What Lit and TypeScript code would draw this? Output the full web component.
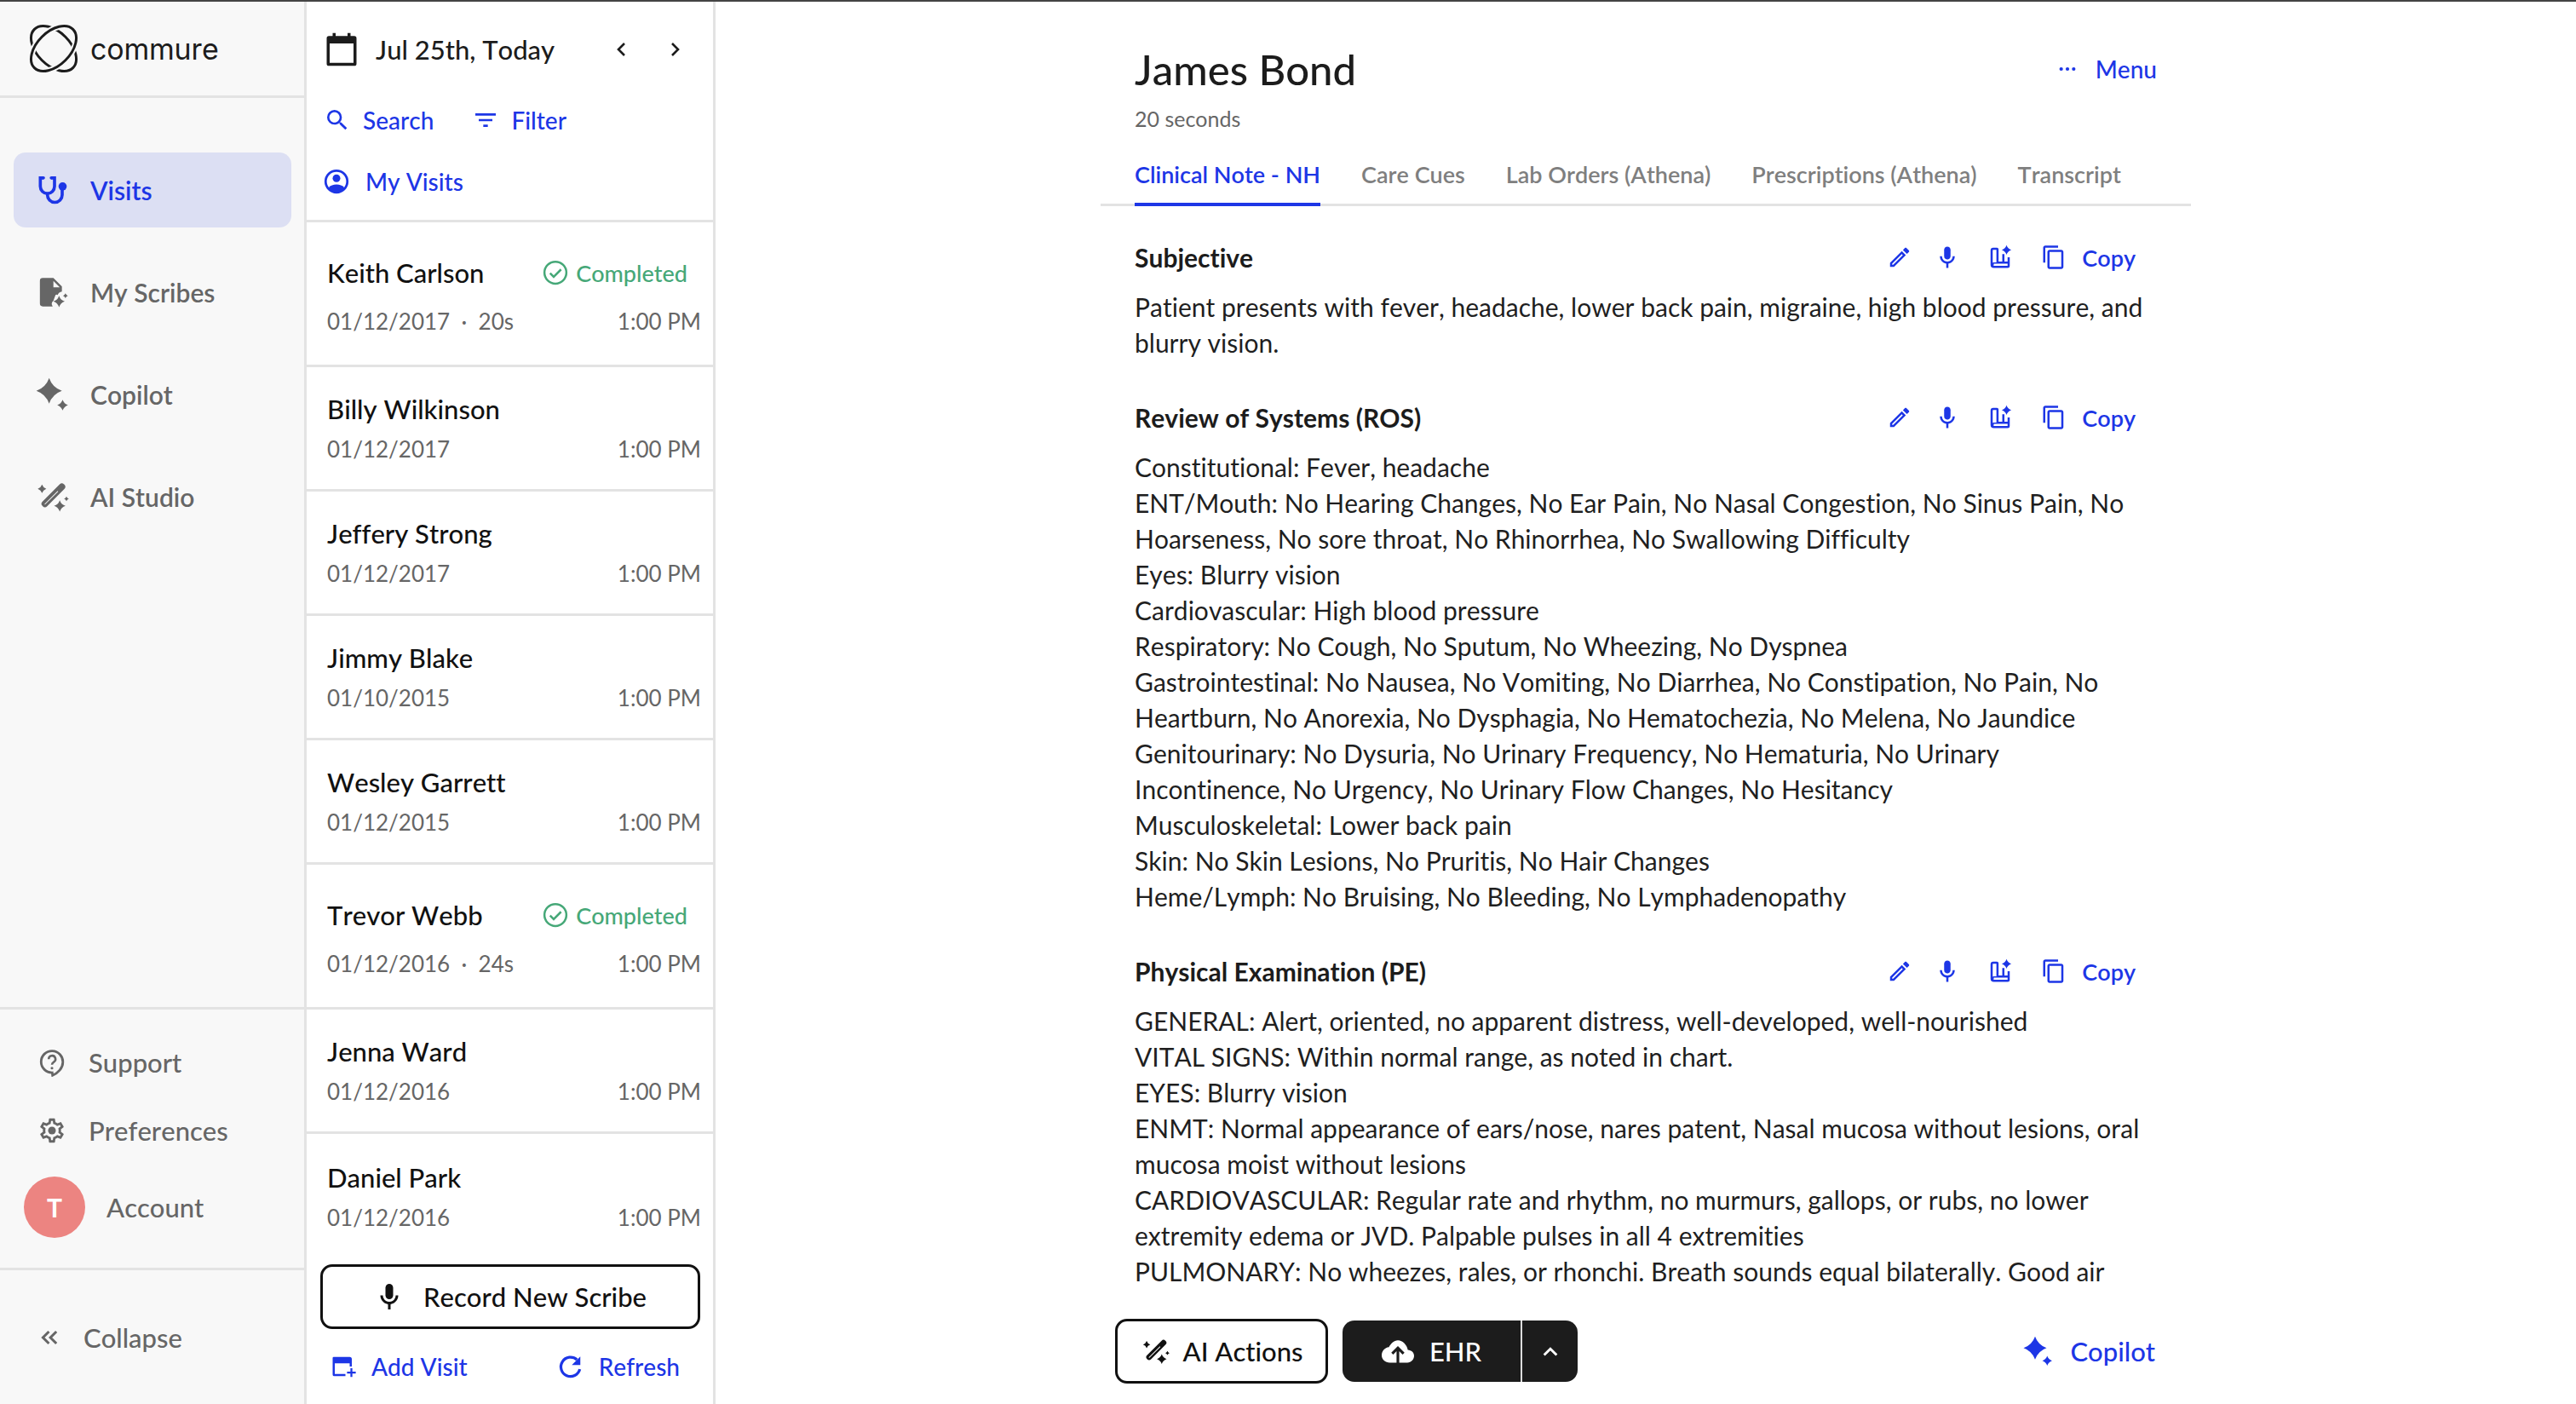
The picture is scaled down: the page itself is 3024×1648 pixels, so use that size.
import { LitElement, html, css, svg } from 'lit';
import { customElement } from 'lit/decorators.js';

// ── Icons ─────────────────────────────────────────────────────────────────────

const icon = (body: unknown, cls = '', box = '0 0 24 24') =>
  html`<svg class="icon ${cls}" viewBox=${box} fill="currentColor">${body}</svg>`;

const sparkle = (cx: number, cy: number, r: number) => {
  const k = r * 0.26;
  return svg`<path d="M${cx} ${cy - r}Q${cx + k} ${cy - k} ${cx + r} ${cy}Q${cx + k} ${cy + k} ${cx} ${cy + r}Q${cx - k} ${cy + k} ${cx - r} ${cy}Q${cx - k} ${cy - k} ${cx} ${cy - r}Z"/>`;
};

const MIC = svg`<path d="M12 14c1.66 0 3-1.34 3-3V5c0-1.66-1.34-3-3-3S9 3.34 9 5v6c0 1.66 1.34 3 3 3z"/><path d="M17 11c0 2.76-2.24 5-5 5s-5-2.24-5-5H5c0 3.53 2.61 6.43 6 6.92V22h2v-4.08c3.39-.49 6-3.39 6-6.92h-2z"/>`;
const EDIT = svg`<path d="M3 17.25V21h3.75L17.81 9.94l-3.75-3.75L3 17.25zM5.92 19H5v-.92l9.06-9.06.92.92L5.92 19zM20.71 5.63l-2.34-2.34c-.2-.2-.45-.29-.71-.29s-.51.1-.7.29l-1.83 1.83 3.75 3.75 1.83-1.83c.39-.39.39-1.02 0-1.41z"/>`;
const COPY = svg`<path d="M16 1H4c-1.1 0-2 .9-2 2v14h2V3h12V1zm3 4H8c-1.1 0-2 .9-2 2v14c0 1.1.9 2 2 2h11c1.1 0 2-.9 2-2V7c0-1.1-.9-2-2-2zm0 16H8V7h11v14z"/>`;
const NOTE_AI = svg`<path d="M3 17V5.500A2.500 2.500 0 0 1 5.500 3H9a1.500 1.500 0 0 1 1.500 1.500V16H14V9h2v7h3v-4h2v8a2 2 0 0 1-2 2H6a3 3 0 0 1-3-3v-2zm2 0a3 3 0 0 1 1-.3h2.500V5H5.500a.5.5 0 0 0-.5.5V17zm1 1.700a1.150 1.150 0 0 0 0 1.300h13V18H6z"/>${sparkle(18, 5, 4.5)}`;
const WAND = svg`<path d="M17.400 3.300a2.200 2.200 0 0 1 3.100 0l.2.2a2.200 2.200 0 0 1 0 3.100L8.600 18.700a2.200 2.200 0 0 1-3.100 0l-.2-.2a2.200 2.200 0 0 1 0-3.100L17.400 3.300zM16 8l-9.300 9.200.4.400L16.400 8.400 16 8z"/>${sparkle(5, 6.500, 3)}${sparkle(17.500, 18.500, 4)}${sparkle(22.200, 13.500, 1.700)}`;
const GEAR = svg`<path d="M19.43 12.98c.04-.32.07-.64.07-.98 0-.34-.03-.66-.07-.98l2.11-1.65c.19-.15.24-.42.12-.64l-2-3.46c-.09-.16-.26-.25-.44-.25-.06 0-.12.01-.17.03l-2.49 1c-.52-.4-1.08-.73-1.69-.98l-.38-2.65C14.46 2.18 14.25 2 14 2h-4c-.25 0-.46.18-.49.42l-.38 2.65c-.61.25-1.17.59-1.69.98l-2.49-1c-.06-.02-.12-.03-.18-.03-.17 0-.34.09-.43.25l-2 3.46c-.13.22-.07.49.12.64l2.11 1.65c-.04.32-.07.65-.07.98 0 .33.03.66.07.98l-2.11 1.65c-.19.15-.24.42-.12.64l2 3.46c.09.16.26.25.44.25.06 0 .12-.01.17-.03l2.49-1c.52.4 1.08.73 1.69.98l.38 2.65c.03.24.24.42.49.42h4c.25 0 .46-.18.49-.42l.38-2.65c.61-.25 1.17-.59 1.69-.98l2.49 1c.06.02.12.03.18.03.17 0 .34-.09.43-.25l2-3.46c.12-.22.07-.49-.12-.64l-2.11-1.65zm-1.98-1.71c.04.31.05.52.05.73 0 .21-.02.43-.05.73l-.14 1.13.89.7 1.08.84-.7 1.21-1.27-.51-1.04-.42-.9.68c-.43.32-.84.56-1.25.73l-1.06.43-.16 1.13-.2 1.35h-1.4l-.19-1.35-.16-1.13-1.06-.43c-.43-.18-.83-.41-1.23-.71l-.91-.7-1.06.43-1.27.51-.7-1.21 1.08-.84.89-.7-.14-1.13c-.03-.31-.05-.54-.05-.74s.02-.43.05-.73l.14-1.13-.89-.7-1.08-.84.7-1.21 1.27.51 1.04.42.9-.68c.43-.32.84-.56 1.25-.73l1.06-.43.16-1.13.2-1.35h1.39l.19 1.35.16 1.13 1.06.43c.43.18.83.41 1.23.71l.91.7 1.06-.43 1.27-.51.7 1.21-1.07.85-.89.7.14 1.13z"/><circle cx="12" cy="12" r="3.200"/>`;

const ICONS = {
  stethoscope: svg`<g fill="none" stroke="currentColor" stroke-width="2.200"><path d="M6 3.500H3.800v6a5 5 0 0 0 10 0v-6H11.500"/><path d="M8.800 14.500v1a5.200 5.200 0 0 0 10.400 0V11"/></g><circle cx="6" cy="3.500" r="1.100"/><circle cx="11.500" cy="3.500" r="1.100"/><circle cx="19.500" cy="9.500" r="2.900"/>`,
  scribes: svg`<path d="M5.500 2H13l6 6v3.500c-1.500.2-2.500 1-3 2.500-.5-.5-1-.5-1.500 0l-1.500 4a3 3 0 0 0-.5 4H5.500a2 2 0 0 1-2-2V4a2 2 0 0 1 2-2z"/><path d="M13 4v4.500H17.500z" fill="#f8f8f8"/>${sparkle(17, 18.500, 4)}${sparkle(21.500, 14.500, 1.700)}`,
  copilot: svg`${sparkle(10, 9.500, 9)}${sparkle(19.500, 19.500, 3.800)}`,
  search: svg`<path d="M15.500 14h-.79l-.28-.27A6.471 6.471 0 0 0 16 9.500 6.500 6.500 0 1 0 9.500 16c1.610 0 3.090-.59 4.230-1.570l.27.28v.79l5 4.990L20.490 19l-4.990-5zm-6 0C7.010 14 5 11.990 5 9.500S7.010 5 9.500 5 14 7.010 14 9.500 11.990 14 9.500 14z"/>`,
  filter: svg`<path d="M10 18h4v-2h-4v2zM3 6v2h18V6H3zm3 7h12v-2H6v2z"/>`,
  person: svg`<circle cx="12" cy="12" r="10.200" fill="none" stroke="currentColor" stroke-width="2.200"/><circle cx="12" cy="9" r="3.600"/><path d="M4.500 18c1.800-2.400 4.500-3.200 7.500-3.200s5.700.8 7.500 3.200c-1.800 2.700-4.600 4-7.500 4s-5.700-1.300-7.500-4z"/>`,
  calendar: svg`<path d="M6 1h2v2h8V1h2v2h2.500A1.500 1.500 0 0 1 22 4.500v17a1.500 1.500 0 0 1-1.500 1.500h-17A1.500 1.500 0 0 1 2 21.500v-17A1.500 1.500 0 0 1 3.500 3H6V1zM4 8v13h16V8H4z"/>`,
  check: svg`<circle cx="12" cy="12" r="10.300" fill="none" stroke="currentColor" stroke-width="2"/><path d="M7 12.500l3.400 3.400L17.300 9" fill="none" stroke="currentColor" stroke-width="2"/>`,
  help: svg`<path d="M12.500 22.800l-.3-2.300a9 9 0 1 1 8.800-8.500c0 4.800-4 8.800-8.500 10.800z" fill="none" stroke="currentColor" stroke-width="2"/><path d="M9.300 9.300a2.800 2.800 0 1 1 4.200 2.400c-1 .6-1.500 1.100-1.500 2.300" fill="none" stroke="currentColor" stroke-width="1.800"/><circle cx="12" cy="16.800" r="1.100"/>`,
  collapse: svg`<path d="M11.500 6l-6 6 6 6M19 6l-6 6 6 6" fill="none" stroke="currentColor" stroke-width="2.600"/>`,
  left: svg`<path d="M15 5l-7 7 7 7" fill="none" stroke="currentColor" stroke-width="2.600"/>`,
  right: svg`<path d="M9 5l7 7-7 7" fill="none" stroke="currentColor" stroke-width="2.600"/>`,
  up: svg`<path d="M4 17l8-8 8 8" fill="none" stroke="currentColor" stroke-width="3.200"/>`,
  addVisit: svg`<path d="M3 3h15a2 2 0 0 1 2 2v7h-2V9H4v10h10v2H3.500A1.500 1.500 0 0 1 2 19.500V4a1 1 0 0 1 1-1z"/><path d="M18.700 13.500h1.800v3.200h3.200v1.800h-3.200v3.200h-1.800v-3.200h-3.200v-1.800h3.200z"/>`,
  refresh: svg`<path d="M20.500 14.500A9 9 0 1 1 17.800 5.600" fill="none" stroke="currentColor" stroke-width="2.600"/><path d="M21 2.500v8h-8z"/>`,
  dots: svg`<circle cx="4" cy="12" r="2.300"/><circle cx="12" cy="12" r="2.300"/><circle cx="20" cy="12" r="2.300"/>`,
  cloud: svg`<path d="M19.350 11.040C18.670 7.590 15.640 4 12 4 9.110 4 6.600 6.640 5.350 9.040 2.340 9.360 0 11.910 0 15c0 3.310 2.690 5.500 6 5.500h13c2.760 0 5-2.240 5-5 0-2.640-2.050-4.280-4.650-4.460z"/><path d="M12 21v-11M7.800 13.800L12 9.600l4.200 4.200" fill="none" stroke="#1c1c1c" stroke-width="2"/>`,
};

// ── Data ──────────────────────────────────────────────────────────────────────

const NAV = [
  { label: 'Visits', icon: ICONS.stethoscope, active: true },
  { label: 'My Scribes', icon: ICONS.scribes },
  { label: 'Copilot', icon: ICONS.copilot },
  { label: 'AI Studio', icon: WAND },
];

const VISITS = [
  { name: 'Keith Carlson', date: '01/12/2017', dur: '20s', done: true },
  { name: 'Billy Wilkinson', date: '01/12/2017' },
  { name: 'Jeffery Strong', date: '01/12/2017' },
  { name: 'Jimmy Blake', date: '01/10/2015' },
  { name: 'Wesley Garrett', date: '01/12/2015' },
  { name: 'Trevor Webb', date: '01/12/2016', dur: '24s', done: true },
  { name: 'Jenna Ward', date: '01/12/2016' },
  { name: 'Daniel Park', date: '01/12/2016' },
];

const TABS = ['Clinical Note - NH', 'Care Cues', 'Lab Orders (Athena)', 'Prescriptions (Athena)', 'Transcript'];

const SECTIONS = [
  {
    title: 'Subjective',
    lines: ['Patient presents with fever, headache, lower back pain, migraine, high blood pressure, and blurry vision.'],
  },
  {
    title: 'Review of Systems (ROS)',
    lines: [
      'Constitutional: Fever, headache',
      'ENT/Mouth: No Hearing Changes, No Ear Pain, No Nasal Congestion, No Sinus Pain, No Hoarseness, No sore throat, No Rhinorrhea, No Swallowing Difficulty',
      'Eyes: Blurry vision',
      'Cardiovascular: High blood pressure',
      'Respiratory: No Cough, No Sputum, No Wheezing, No Dyspnea',
      'Gastrointestinal: No Nausea, No Vomiting, No Diarrhea, No Constipation, No Pain, No Heartburn, No Anorexia, No Dysphagia, No Hematochezia, No Melena, No Jaundice',
      'Genitourinary: No Dysuria, No Urinary Frequency, No Hematuria, No Urinary Incontinence, No Urgency, No Urinary Flow Changes, No Hesitancy',
      'Musculoskeletal: Lower back pain',
      'Skin: No Skin Lesions, No Pruritis, No Hair Changes',
      'Heme/Lymph: No Bruising, No Bleeding, No Lymphadenopathy',
    ],
  },
  {
    title: 'Physical Examination (PE)',
    lines: [
      'GENERAL: Alert, oriented, no apparent distress, well-developed, well-nourished',
      'VITAL SIGNS: Within normal range, as noted in chart.',
      'EYES: Blurry vision',
      'ENMT: Normal appearance of ears/nose, nares patent, Nasal mucosa without lesions, oral mucosa moist without lesions',
      'CARDIOVASCULAR: Regular rate and rhythm, no murmurs, gallops, or rubs, no lower extremity edema or JVD. Palpable pulses in all 4 extremities',
      'PULMONARY: No wheezes, rales, or rhonchi. Breath sounds equal bilaterally. Good air movement throughout all lung fields.',
    ],
  },
];

// ── AppRoot ───────────────────────────────────────────────────────────────────

@customElement('app-root')
export class AppRoot extends LitElement {
  static styles = css`
    :host {
      display: grid;
      grid-template-columns: 360px 480px 1fr;
      grid-template-rows: minmax(0, 1fr);
      height: 1648px;
      box-sizing: border-box;
      border-top: 2px solid #444;
      overflow: hidden;
      background: #fff;
      color: #1f1f1f;
      font-family: Lato, 'Liberation Sans', sans-serif;
      font-kerning: none;
      font-variant-ligatures: none;
      --blue: #1d36e6;
      --line: #e3e3e3;
    }

    * {
      box-sizing: border-box;
    }

    .icon {
      display: block;
      flex: none;
      width: 28px;
      height: 28px;
    }

    /* sidebar */

    .sidebar {
      display: flex;
      flex-direction: column;
      min-height: 0;
      background: #f8f8f8;
      border-right: 3px solid var(--line);
      color: #666;
    }

    .brand {
      display: flex;
      align-items: center;
      gap: 14px;
      height: 113px;
      padding: 0 0 0 34px;
      border-bottom: 3px solid var(--line);
      color: #1c1c1c;
      font-family: Inter, sans-serif;
      font-size: 34px;
      letter-spacing: -0.2px;
    }

    .brand svg {
      width: 58px;
      height: 58px;
    }

    .nav {
      display: flex;
      flex-direction: column;
      gap: 32px;
      flex: 1;
      padding: 64px 15px 0 16px;
    }

    .nav-item {
      display: flex;
      align-items: center;
      gap: 25px;
      height: 88px;
      padding-left: 25px;
      border-radius: 14px;
      font-size: 30px;
      font-weight: 600;
    }

    .nav-item .icon {
      width: 40px;
      height: 40px;
    }

    .nav-item.active {
      background: #dcdff3;
      color: var(--blue);
    }

    .foot {
      display: flex;
      flex-direction: column;
      height: 306px;
      padding: 22px 0 0 28px;
      border-top: 3px solid var(--line);
      font-size: 31px;
      font-weight: 500;
    }

    .foot-item {
      display: flex;
      align-items: center;
      gap: 26px;
      height: 80px;
      padding-left: 16px;
    }

    .foot-item .icon {
      width: 34px;
      height: 34px;
    }

    .account {
      display: flex;
      align-items: center;
      gap: 25px;
      height: 100px;
    }

    .avatar {
      display: flex;
      align-items: center;
      justify-content: center;
      width: 72px;
      height: 72px;
      border-radius: 50%;
      background: #ec8481;
      color: #fff;
      font-size: 30px;
      font-weight: 700;
    }

    .collapse {
      display: flex;
      align-items: center;
      gap: 26px;
      height: 160px;
      padding: 0 0 0 44px;
      border-top: 3px solid var(--line);
      font-size: 31px;
      font-weight: 500;
    }

    /* visit list */

    .list {
      display: flex;
      flex-direction: column;
      min-height: 0;
      border-right: 3px solid var(--line);
    }

    .date-row {
      display: flex;
      align-items: center;
      height: 112px;
      padding: 0 0 0 20px;
      font-size: 31px;
      font-weight: 500;
      color: #1c1c1c;
    }

    .date-row .cal {
      width: 42px;
      height: 42px;
      margin-right: 19px;
    }

    .date-row .nav-arrow {
      width: 24px;
      height: 24px;
    }

    .date-label {
      width: 277px;
    }

    .date-row .gap {
      width: 38px;
    }

    .tools {
      display: flex;
      align-items: center;
      gap: 14px;
      height: 54px;
      padding-left: 20px;
      color: var(--blue);
      font-size: 28px;
      font-weight: 500;
    }

    .tools .icon {
      width: 32px;
      height: 32px;
    }

    .tools .second {
      margin-left: 31px;
    }

    .tools.mine {
      gap: 19px;
      height: 90px;
    }

    .tools.mine .icon {
      width: 30px;
      height: 30px;
    }

    .visits {
      flex: 1;
      min-height: 0;
      border-top: 3px solid var(--line);
    }

    .visit {
      display: flex;
      flex-direction: column;
      justify-content: center;
      gap: 11px;
      height: 146px;
      padding: 0 14px 0 24px;
      border-bottom: 3px solid var(--line);
    }

    .visit:last-child {
      border-bottom: 0;
    }

    .visit.done {
      height: 170px;
      gap: 21px;
      padding-top: 6px;
    }

    .visit-top,
    .visit-sub {
      display: flex;
      align-items: center;
      justify-content: space-between;
    }

    .visit-name {
      font-size: 31px;
      font-weight: 500;
      color: #111;
      line-height: 38px;
    }

    .status {
      display: flex;
      align-items: center;
      gap: 9px;
      margin-right: 16px;
      color: #46a878;
      font-size: 27px;
      font-weight: 500;
    }

    .status .icon {
      width: 30px;
      height: 30px;
    }

    .visit-sub {
      color: #666;
      font-size: 26px;
      line-height: 34px;
    }

    .actions {
      padding: 0 15px 0 16px;
    }

    .record {
      display: flex;
      align-items: center;
      justify-content: center;
      gap: 22px;
      height: 76px;
      border: 3px solid #111;
      border-radius: 14px;
      color: #111;
      font-size: 31px;
      font-weight: 500;
    }

    .record .icon {
      width: 36px;
      height: 36px;
    }

    .links {
      display: flex;
      align-items: center;
      justify-content: space-between;
      height: 88px;
      padding: 0 24px 0 12px;
      color: var(--blue);
      font-size: 28px;
      font-weight: 500;
    }

    .link {
      display: flex;
      align-items: center;
      gap: 18px;
    }

    .links .icon {
      width: 30px;
      height: 30px;
    }

    /* note */

    .main {
      display: flex;
      flex-direction: column;
      align-items: center;
      min-width: 0;
      min-height: 0;
    }

    .panel {
      display: flex;
      flex-direction: column;
      width: 1280px;
      height: 100%;
      min-height: 0;
    }

    .head {
      padding: 0 40px;
    }

    .title-row {
      display: flex;
      align-items: center;
      justify-content: space-between;
      height: 78px;
      margin-top: 40px;
    }

    h1 {
      margin: 0;
      font-size: 49px;
      font-weight: 500;
      color: #1c1c1c;
    }

    .menu {
      display: flex;
      align-items: center;
      gap: 22px;
      color: var(--blue);
      font-size: 28px;
      font-weight: 500;
    }

    .menu .icon {
      width: 22px;
      height: 22px;
    }

    .elapsed {
      margin-top: 4px;
      color: #666;
      font-size: 25px;
      line-height: 30px;
    }

    .tabs {
      display: flex;
      gap: 48px;
      height: 88px;
      padding: 0 40px;
      border-bottom: 3px solid var(--line);
      color: #7f7f7f;
      font-size: 27px;
      font-weight: 600;
    }

    .tab {
      display: flex;
      align-items: center;
      padding-top: 17px;
      height: 88px;
      border-bottom: 4px solid transparent;
    }

    .tab.active {
      color: var(--blue);
      border-bottom-color: var(--blue);
    }

    .note {
      flex: 1;
      min-height: 0;
      overflow: hidden;
      padding: 35px 40px 0;
    }

    .section {
      margin-bottom: 42px;
    }

    .section-head {
      display: flex;
      align-items: center;
      justify-content: space-between;
      height: 50px;
      padding-right: 25px;
      margin-bottom: 12px;
    }

    h2 {
      margin: 0;
      font-size: 30px;
      font-weight: 700;
      color: #1c1c1c;
    }

    .section-tools {
      display: flex;
      align-items: center;
      color: var(--blue);
      font-size: 27px;
      font-weight: 600;
    }

    .section-tools .icon {
      width: 30px;
      height: 30px;
    }

    .section-tools .edit {
      margin-right: 26px;
    }

    .section-tools .mic {
      margin-right: 32px;
    }

    .section-tools .doc {
      margin-right: 33px;
    }

    .section-tools .copy {
      margin-right: 18px;
    }

    .line {
      font-size: 30px;
      line-height: 42px;
      color: #1f1f1f;
    }

    .bottom {
      display: flex;
      align-items: center;
      flex: none;
      height: 134px;
      padding: 10px 42px 0 17px;
      background: #fff;
    }

    .btn-ai {
      display: flex;
      align-items: center;
      justify-content: center;
      gap: 16px;
      width: 250px;
      height: 76px;
      border: 3px solid #111;
      border-radius: 14px;
      color: #111;
      font-size: 31px;
      font-weight: 500;
    }

    .btn-ai .icon {
      width: 34px;
      height: 34px;
    }

    .ehr {
      display: flex;
      height: 72px;
      margin-left: 17px;
      border-radius: 14px;
      overflow: hidden;
      background: #1c1c1c;
      color: #fff;
      font-size: 31px;
      font-weight: 500;
    }

    .ehr-main {
      display: flex;
      align-items: center;
      justify-content: center;
      gap: 18px;
      width: 211px;
      border-right: 2px solid #ddd;
    }

    .ehr-main .icon {
      width: 38px;
      height: 38px;
    }

    .ehr-more {
      display: flex;
      align-items: center;
      justify-content: center;
      width: 65px;
    }

    .ehr-more .icon {
      width: 22px;
      height: 22px;
    }

    .copilot {
      display: flex;
      align-items: center;
      gap: 20px;
      margin-left: auto;
      color: var(--blue);
      font-size: 31px;
      font-weight: 500;
    }

    .copilot .icon {
      width: 36px;
      height: 36px;
    }
  `;

  private renderLogo() {
    return html`<svg viewBox="0 0 58 58" fill="none" stroke="currentColor" stroke-width="3">
      <ellipse cx="29" cy="29" rx="32" ry="19.500" transform="rotate(45 29 29)" />
      <ellipse cx="29" cy="29" rx="32" ry="19.500" transform="rotate(-45 29 29)" stroke="#f8f8f8" stroke-width="7" />
      <ellipse cx="29" cy="29" rx="32" ry="19.500" transform="rotate(-45 29 29)" />
    </svg>`;
  }

  private renderSidebar() {
    return html`
      <aside class="sidebar">
        <div class="brand">${this.renderLogo()}<span>commure</span></div>
        <nav class="nav">
          ${NAV.map(
            (n) => html`<div class="nav-item ${n.active ? 'active' : ''}">${icon(n.icon)}<span>${n.label}</span></div>`,
          )}
        </nav>
        <div class="foot">
          <div class="foot-item">${icon(ICONS.help)}<span>Support</span></div>
          <div class="foot-item">${icon(GEAR)}<span>Preferences</span></div>
          <div class="account"><div class="avatar">T</div><span>Account</span></div>
        </div>
        <div class="collapse">${icon(ICONS.collapse)}<span>Collapse</span></div>
      </aside>
    `;
  }

  private renderList() {
    return html`
      <section class="list">
        <div class="date-row">
          ${icon(ICONS.calendar, 'cal')}
          <span class="date-label">Jul 25th, Today</span>
          ${icon(ICONS.left, 'nav-arrow')}
          <span class="gap"></span>
          ${icon(ICONS.right, 'nav-arrow')}
        </div>
        <div class="tools">
          ${icon(ICONS.search)}<span>Search</span>
          ${icon(ICONS.filter, 'second')}<span>Filter</span>
        </div>
        <div class="tools mine">${icon(ICONS.person)}<span>My Visits</span></div>
        <div class="visits">
          ${VISITS.map(
            (v) => html`
              <div class="visit ${v.done ? 'done' : ''}">
                <div class="visit-top">
                  <span class="visit-name">${v.name}</span>
                  ${v.done ? html`<span class="status">${icon(ICONS.check)}Completed</span>` : ''}
                </div>
                <div class="visit-sub">
                  <span>${v.date}${v.dur ? html`&nbsp; · &nbsp;${v.dur}` : ''}</span>
                  <span>1:00 PM</span>
                </div>
              </div>
            `,
          )}
        </div>
        <div class="actions">
          <div class="record">${icon(MIC)}<span>Record New Scribe</span></div>
          <div class="links">
            <span class="link">${icon(ICONS.addVisit)}Add Visit</span>
            <span class="link">${icon(ICONS.refresh)}Refresh</span>
          </div>
        </div>
      </section>
    `;
  }

  private renderNote() {
    return html`
      <main class="main">
        <div class="panel">
          <div class="head">
            <div class="title-row">
              <h1>James Bond</h1>
              <span class="menu">${icon(ICONS.dots)}Menu</span>
            </div>
            <div class="elapsed">20 seconds</div>
          </div>
          <div class="tabs">
            ${TABS.map((t, i) => html`<div class="tab ${i === 0 ? 'active' : ''}">${t}</div>`)}
          </div>
          <div class="note">
            ${SECTIONS.map(
              (s) => html`
                <div class="section">
                  <div class="section-head">
                    <h2>${s.title}</h2>
                    <div class="section-tools">
                      ${icon(EDIT, 'edit')}${icon(MIC, 'mic')}${icon(NOTE_AI, 'doc')}${icon(COPY, 'copy')}Copy
                    </div>
                  </div>
                  ${s.lines.map((l) => html`<div class="line">${l}</div>`)}
                </div>
              `,
            )}
          </div>
          <div class="bottom">
            <div class="btn-ai">${icon(WAND)}AI Actions</div>
            <div class="ehr">
              <div class="ehr-main">${icon(ICONS.cloud)}EHR</div>
              <div class="ehr-more">${icon(ICONS.up)}</div>
            </div>
            <div class="copilot">${icon(ICONS.copilot)}Copilot</div>
          </div>
        </div>
      </main>
    `;
  }

  render() {
    return html`${this.renderSidebar()}${this.renderList()}${this.renderNote()}`;
  }
}

declare global {
  interface HTMLElementTagNameMap {
    'app-root': AppRoot;
  }
}
